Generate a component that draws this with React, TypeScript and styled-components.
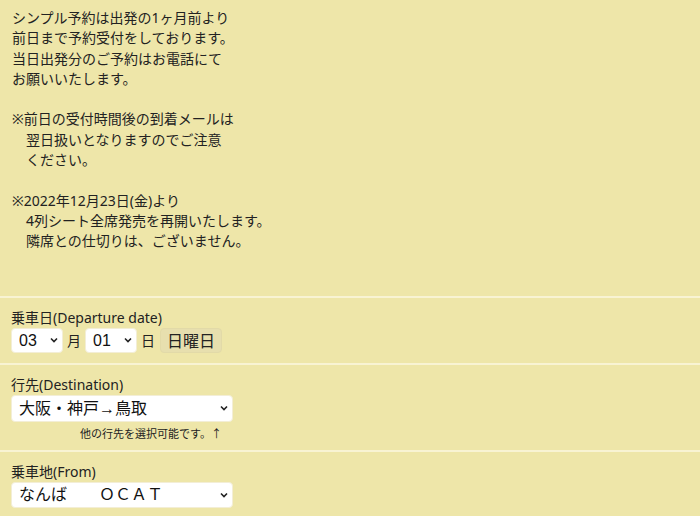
import React from "react";
import styled, { createGlobalStyle } from "styled-components";

const GlobalStyle = createGlobalStyle`
  html, body {
    margin: 0;
    padding: 0;
    background: #eee6a9;
  }
  body {
    font-family: "Noto Sans", "Noto Sans CJK JP", sans-serif;
    color: #222;
  }
`;

const Page = styled.div`
  width: 700px;
  min-height: 516px;
  background: #eee6a9;
`;

const Notice = styled.div`
  padding: 8px 12px 44px 12px;
  font-size: 14px;
  line-height: 20.3px;
`;

const Line = styled.div<{ $indent?: boolean }>`
  height: 20.3px;
  white-space: pre;
  padding-left: ${({ $indent }) => ($indent ? "14px" : "0")};
`;

const Section = styled.section`
  border-top: 2px solid #f8f3d3;
  padding: 10px 11px 10px 11px;
`;

const Label = styled.div`
  font-size: 14px;
  line-height: 20px;
`;

const Row = styled.div`
  display: flex;
  align-items: center;
  gap: 4px;
`;

const SelectWrap = styled.div<{ $width: number; $height: number }>`
  position: relative;
  width: ${({ $width }) => $width}px;
  height: ${({ $height }) => $height}px;
`;

const Select = styled.select`
  appearance: none;
  -webkit-appearance: none;
  width: 100%;
  height: 100%;
  border: 1px solid #f3eed6;
  border-radius: 4px;
  background: #fff;
  color: #111;
  font-family: "Liberation Sans", "Noto Sans CJK JP", sans-serif;
  font-size: 16px;
  padding: 0 0 0 7px;
  outline: none;
`;

const Chevron = styled.svg`
  position: absolute;
  right: 5px;
  top: 50%;
  margin-top: -3px;
  width: 8px;
  height: 6px;
  pointer-events: none;
`;

const Unit = styled.span`
  font-size: 14px;
`;

const DayButton = styled.button`
  height: 25px;
  padding: 0 6px;
  margin-left: 1px;
  border: 1px solid #e2daa8;
  border-radius: 4px;
  background: #e7dfae;
  color: #222;
  font-family: "Noto Sans CJK JP", sans-serif;
  font-size: 16px;
  line-height: 23px;
`;

const Note = styled.div`
  width: 211px;
  text-align: right;
  font-size: 11px;
  line-height: 14px;
  margin-top: 4px;
  font-family: "Noto Sans CJK JP", sans-serif;
`;

const notice: [string, boolean][] = [
  ["シンプル予約は出発の1ヶ月前より", false],
  ["前日まで予約受付をしております。", false],
  ["当日出発分のご予約はお電話にて", false],
  ["お願いいたします。", false],
  ["", false],
  ["※前日の受付時間後の到着メールは", false],
  ["翌日扱いとなりますのでご注意", true],
  ["ください。", true],
  ["", false],
  ["※2022年12月23日(金)より", false],
  ["4列シート全席発売を再開いたします。", true],
  ["隣席との仕切りは、ございません。", true],
];

const Dropdown: React.FC<{ width: number; height: number; value: string }> = ({
  width,
  height,
  value,
}) => (
  <SelectWrap $width={width} $height={height}>
    <Select defaultValue={value}>
      <option value={value}>{value}</option>
    </Select>
    <Chevron viewBox="0 0 8 6">
      <path d="M1 1.5 L4 4.5 L7 1.5" fill="none" stroke="#222" strokeWidth="1.6" />
    </Chevron>
  </SelectWrap>
);

export default function App() {
  return (
    <Page>
      <GlobalStyle />
      <Notice>
        {notice.map(([text, indent], i) => (
          <Line key={i} $indent={indent}>
            {text}
          </Line>
        ))}
      </Notice>
      <Section>
        <Label>乗車日(Departure date)</Label>
        <Row>
          <Dropdown width={52} height={25} value="03" />
          <Unit>月</Unit>
          <Dropdown width={52} height={25} value="01" />
          <Unit>日</Unit>
          <DayButton>日曜日</DayButton>
        </Row>
      </Section>
      <Section>
        <Label>行先(Destination)</Label>
        <Dropdown width={222} height={27} value="大阪・神戸→鳥取" />
        <Note>他の行先を選択可能です。↑</Note>
      </Section>
      <Section>
        <Label>乗車地(From)</Label>
        <Dropdown width={222} height={26} value="なんば　　ＯＣＡＴ" />
      </Section>
    </Page>
  );
}
